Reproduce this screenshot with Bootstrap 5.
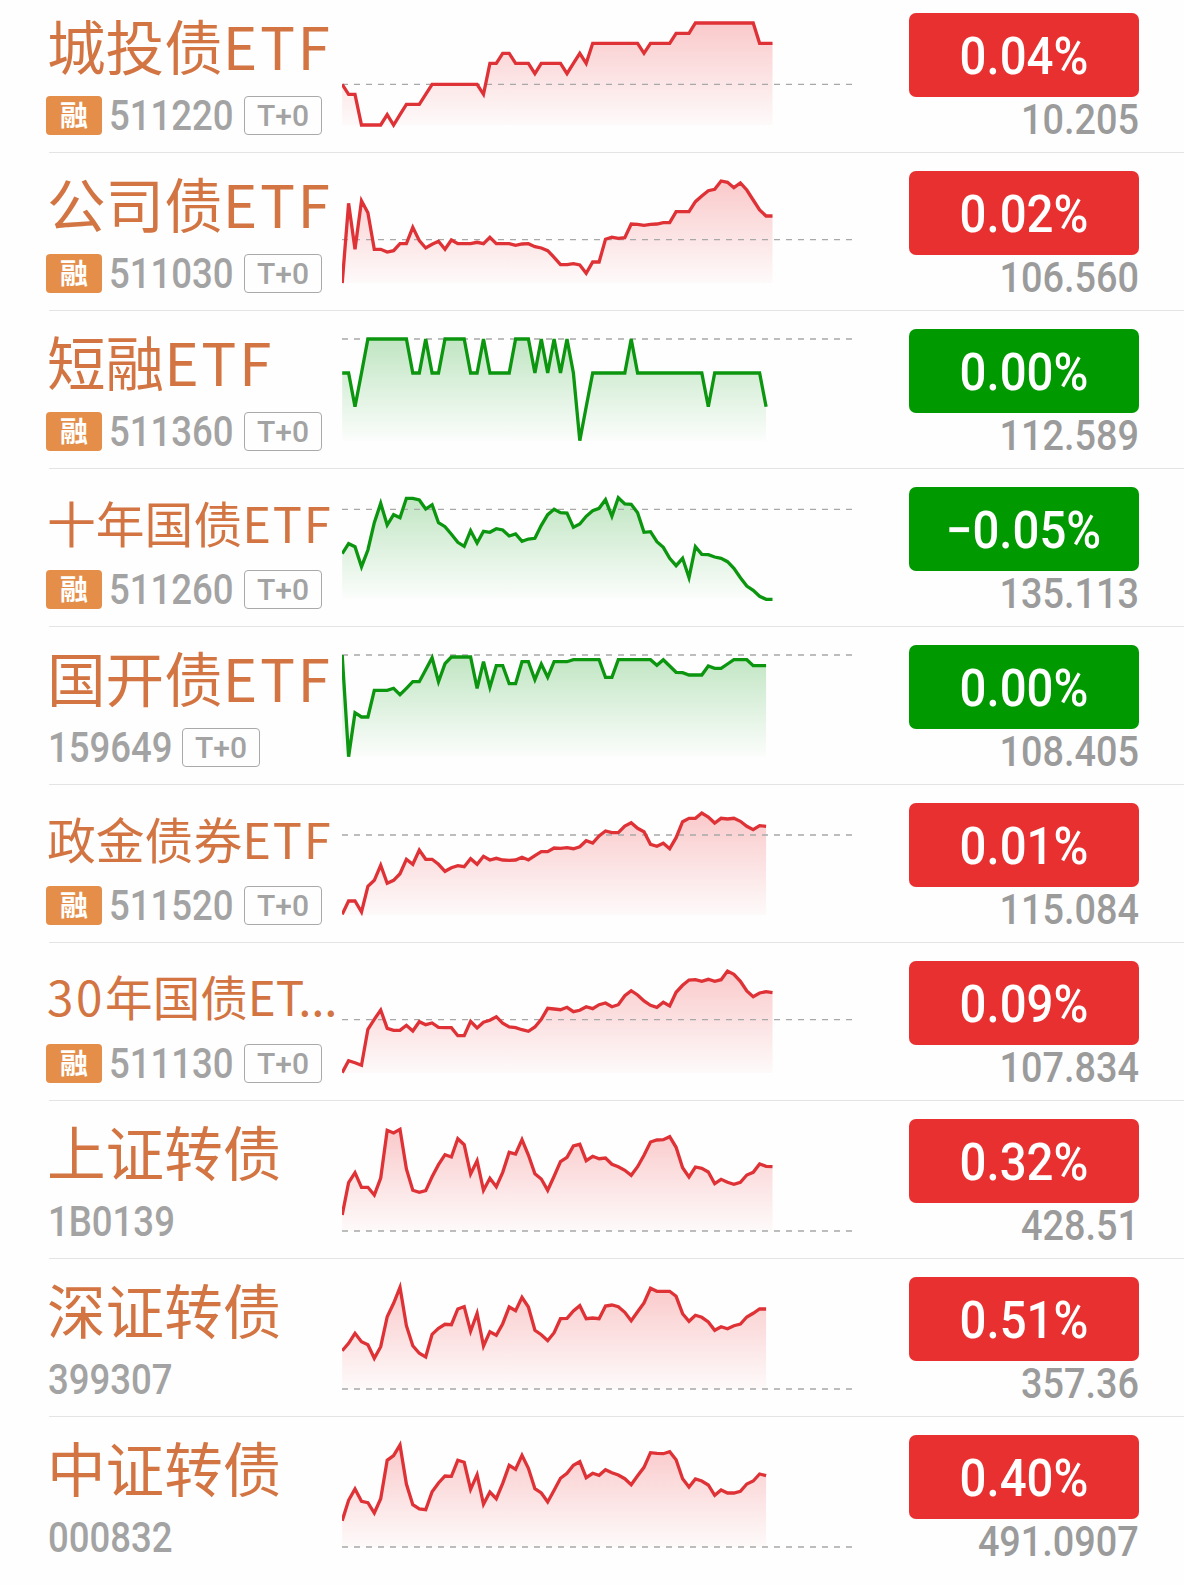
<!DOCTYPE html>
<html lang="zh-CN">
<head>
<meta charset="utf-8">
<meta name="viewport" content="width=device-width, initial-scale=1">
<title>债券ETF行情</title>
<link href="https://cdn.jsdelivr.net/npm/bootstrap@5.3.0/dist/css/bootstrap.min.css" rel="stylesheet">
<style>
  body { background:#fefefe; font-family:Roboto,"Noto Sans CJK SC",sans-serif; overflow:hidden; }
  .quotes { margin:-5px 0 0 49px; }
  .quote { height:158px; border-bottom:1px solid #e4e4e4; }
  .quote:last-child { border-bottom:0; }
  .q-info { width:293px; padding-top:8px; }
  .q-name { height:87px; line-height:83px; margin-left:-2px; font-family:"Noto Sans CJK SC",sans-serif; font-size:58.6px; color:#d37543; }
  .q-name span { letter-spacing:2.6px; }
  .q-name.long { font-size:48.8px; padding-top:3px; }
  .q-name.long span { letter-spacing:1.8px; }
  .q-name.longest { font-size:47.6px; padding-top:3px; }
  .q-name.longest .ell { letter-spacing:-.2px; }
  .q-meta { height:50px; }
  .q-rong { width:56px; height:39px; margin-left:-3px; margin-right:7px; border-radius:4px; background:#e48e4a; color:#fff; font:700 28px/37px "Noto Sans CJK SC",sans-serif; text-align:center; }
  .q-code { width:135px; font-size:42px; font-weight:500; line-height:50px; padding-top:2px; color:#a3a3a3; }
  .q-code span, .q-price span, .q-change span { display:inline-block; transform:scaleX(.87); transform-origin:left; }
  .q-code.plain { width:133px; }
  .q-code.plain span { margin-left:-1px; }
  .q-t0 { width:78px; height:39px; border:1px solid #a9a9a9; border-radius:4px; color:#a3a3a3; font-size:30px; font-weight:500; line-height:38px; text-align:center; }
  .q-chart { width:511px; height:157px; }
  .q-value { width:230px; margin-left:56px; padding-top:18px; }
  .q-change { height:84px; border-radius:7px; color:#fff; font-size:51.5px; font-weight:500; line-height:88px; text-align:center; }
  .q-change span { transform:scaleX(.92); transform-origin:center; }
  .up { background:#e93030; }
  .down { background:#009900; }
  .q-price { height:46px; font-size:42px; font-weight:500; line-height:46px; color:#9b9b9b; text-align:right; }
  .q-price span { transform:scaleX(.9); transform-origin:right; }
</style>
<script src="https://cdn.jsdelivr.net/npm/bootstrap@5.3.0/dist/js/bootstrap.bundle.min.js"></script>
</head>
<body>
<svg width="0" height="0" class="position-absolute">
  <defs>
    <linearGradient id="fillUp" gradientUnits="userSpaceOnUse" x1="0" y1="28" x2="0" y2="130"><stop offset="0" stop-color="#ee3338" stop-opacity=".26"/><stop offset="1" stop-color="#ee3338" stop-opacity=".02"/></linearGradient>
    <linearGradient id="fillDown" gradientUnits="userSpaceOnUse" x1="0" y1="28" x2="0" y2="130"><stop offset="0" stop-color="#109f18" stop-opacity=".26"/><stop offset="1" stop-color="#109f18" stop-opacity=".01"/></linearGradient>
  </defs>
</svg>
<main class="quotes">
  <div class="quote d-flex">
    <div class="q-info flex-shrink-0"><div class="q-name text-nowrap">城投债<span>ETF</span></div><div class="q-meta d-flex align-items-center"><span class="q-rong">融</span><span class="q-code"><span>511220</span></span><span class="q-t0">T+0</span></div></div>
    <svg class="q-chart flex-shrink-0" data-dir="up" data-shift="5" data-base="253" data-v="253 283*2 375*4 344 375 344 313*3 283 253*8 283 190*2 160*2 190*3 221 190*4 221 190 160 190 130*8 160 130*4 100*3 69*10 130*3"></svg>
    <div class="q-value flex-shrink-0"><div class="q-change up"><span>0.04%</span></div><div class="q-price"><span>10.205</span></div></div>
  </div>
  <div class="quote d-flex">
    <div class="q-info flex-shrink-0"><div class="q-name text-nowrap">公司债<span>ETF</span></div><div class="q-meta d-flex align-items-center"><span class="q-rong">融</span><span class="q-code"><span>511030</span></span><span class="q-t0">T+0</span></div></div>
    <svg class="q-chart flex-shrink-0" data-dir="up" data-shift="7" data-base="239" data-v="369 130 268 122 158 268*2 276 272 251*2 202 242 264 253 244 268 240 251*3 247 251 232 251*3 256 252 251 260 264 272 292 314*2 311 315 340 306*2 238 232 235 233 192 193 196 193 192 188*2 155*3 125 108 92 88 63 67 83 69 90 120 150 168*2"></svg>
    <div class="q-value flex-shrink-0"><div class="q-change up"><span>0.02%</span></div><div class="q-price"><span>106.560</span></div></div>
  </div>
  <div class="quote d-flex">
    <div class="q-info flex-shrink-0"><div class="q-name text-nowrap">短融<span>ETF</span></div><div class="q-meta d-flex align-items-center"><span class="q-rong">融</span><span class="q-code"><span>511360</span></span><span class="q-t0">T+0</span></div></div>
    <svg class="q-chart flex-shrink-0" data-dir="down" data-shift="4" data-base="72" data-v="174*2 275 174 72*7 174*2 72 174*2 72*4 174*2 72 174*4 72*3 174 72 174 72 174 72 174 377 275 174*6 72 174*11 275 174*8 275"></svg>
    <div class="q-value flex-shrink-0"><div class="q-change down"><span>0.00%</span></div><div class="q-price"><span>112.589</span></div></div>
  </div>
  <div class="quote d-flex">
    <div class="q-info flex-shrink-0"><div class="q-name long text-nowrap">十年国债<span>ETF</span></div><div class="q-meta d-flex align-items-center"><span class="q-rong">融</span><span class="q-code"><span>511260</span></span><span class="q-t0">T+0</span></div></div>
    <svg class="q-chart flex-shrink-0" data-dir="down" data-shift="6" data-base="103" data-v="236 206 215 275 225 143 85 150 119 128 70*2 75 102 89 143 155 178 202 214 167 204 169 172 161 165 183 177 199 192 190 151 119 103 113 114 157 147 124 107 100 74 124 68 87 88 113 172 170 200 217 250 272 250 308 215 238 239 246 250 260 280 308 333 346 364 373*2"></svg>
    <div class="q-value flex-shrink-0"><div class="q-change down"><span>−0.05%</span></div><div class="q-price"><span>135.113</span></div></div>
  </div>
  <div class="quote d-flex">
    <div class="q-info flex-shrink-0"><div class="q-name text-nowrap">国开债<span>ETF</span></div><div class="q-meta d-flex align-items-center"><span class="q-code plain"><span>159649</span></span><span class="q-t0">T+0</span></div></div>
    <svg class="q-chart flex-shrink-0" data-dir="down" data-shift="3" data-base="75" data-v="75 380 248 261*2 181*3 175 194 175 155*2 119 83 155 101 81*4 175 95 172 107*2 161*2 95*2 149 102 142 95*3 89*5 142*2 89*6 106 89 108 127 128 135*3 108 115*2 102 89*3 107*3"></svg>
    <div class="q-value flex-shrink-0"><div class="q-change down"><span>0.00%</span></div><div class="q-price"><span>108.405</span></div></div>
  </div>
  <div class="quote d-flex">
    <div class="q-info flex-shrink-0"><div class="q-name long text-nowrap">政金债券<span>ETF</span></div><div class="q-meta d-flex align-items-center"><span class="q-rong">融</span><span class="q-code"><span>511520</span></span><span class="q-t0">T+0</span></div></div>
    <svg class="q-chart flex-shrink-0" data-dir="up" data-shift="5" data-base="135" data-v="373 333*2 366 289 271 226 280 271 251 208 223 180 208*2 223 244 233 227 230 206 223 199 210 205 210 211 210 202 210 197 185*2 174 175 173 176 170 152 159 138 123 128*2 108 98 115 125 163 169 160 176 143 95 85*2 69 81 99 85 87 85 94 109 119 107 109"></svg>
    <div class="q-value flex-shrink-0"><div class="q-change up"><span>0.01%</span></div><div class="q-price"><span>115.084</span></div></div>
  </div>
  <div class="quote d-flex">
    <div class="q-info flex-shrink-0"><div class="q-name longest text-nowrap"><span>30</span>年国债<span class="ell">ET...</span></div><div class="q-meta d-flex align-items-center"><span class="q-rong">融</span><span class="q-code"><span>511130</span></span><span class="q-t0">T+0</span></div></div>
    <svg class="q-chart flex-shrink-0" data-dir="up" data-shift="7" data-base="209" data-v="368 332 338 346 238 208 180 235 241*2 226 243 215 224 219 232 233*2 257*2 214 234 217 211 200 220 231 233 239 244 231 208 175 177 179 172 185 181 170 176 164 159 170 164 137 122 135 153 166 172 157 168 127 106 90 89 94 88 94 89 63 73 94 123 140 129 125 128"></svg>
    <div class="q-value flex-shrink-0"><div class="q-change up"><span>0.09%</span></div><div class="q-price"><span>107.834</span></div></div>
  </div>
  <div class="quote d-flex">
    <div class="q-info flex-shrink-0"><div class="q-name text-nowrap">上证转债</div><div class="q-meta d-flex align-items-center"><span class="q-code plain"><span>1B0139</span></span></div></div>
    <svg class="q-chart flex-shrink-0" data-dir="up" data-shift="4" data-base="378" data-v="330 233 203 247*2 270 219 76 84 73 192 256 262 257 215 179 149 156 101 119 207 167 256 220 245 202 142 147 104 150 206 222 256 214 170 157 123 118 167 154 161 159 178 185 196 211 185 151 111 105 104 95 127 188 216 186 190 201 236 223 232 238 232 210 202 177 184 185"></svg>
    <div class="q-value flex-shrink-0"><div class="q-change up"><span>0.32%</span></div><div class="q-price"><span>428.51</span></div></div>
  </div>
  <div class="quote d-flex">
    <div class="q-info flex-shrink-0"><div class="q-name text-nowrap">深证转债</div><div class="q-meta d-flex align-items-center"><span class="q-code plain"><span>399307</span></span></div></div>
    <svg class="q-chart flex-shrink-0" data-dir="up" data-shift="6" data-base="372" data-v="257 235 205 230 239 280 245 155 115 67 182 242 265 276 208 190 178 179 132 125 199 145 243 200 211 176 126 137 97 126 196 209 227 203 161 160 138 122 161 159 161 123 120 125 142 167 140 114 70 79*3 94 146 169 151 157 171 196 185 191 182 177 156 145 132*2"></svg>
    <div class="q-value flex-shrink-0"><div class="q-change up"><span>0.51%</span></div><div class="q-price"><span>357.36</span></div></div>
  </div>
  <div class="quote d-flex">
    <div class="q-info flex-shrink-0"><div class="q-name text-nowrap">中证转债</div><div class="q-meta d-flex align-items-center"><span class="q-code plain"><span>000832</span></span></div></div>
    <svg class="q-chart flex-shrink-0" data-dir="up" data-shift="3" data-base="381" data-v="302 241 207 244 248 279 236 121 107 75 192 254 267 269 215 189 168 169 121 127 208 164 253 216 236 190 136 148 106 145 206 219 246 211 175 160 136 125 173 160 166 149 158 165 176 194 167 142 98 100 101 95 119 176 201 177 183 195 226 210 219*2 214 192 183 162 167"></svg>
    <div class="q-value flex-shrink-0"><div class="q-change up"><span>0.40%</span></div><div class="q-price"><span>491.0907</span></div></div>
  </div>
</main>
<script>
  // Draws each intraday sparkline: "a*n" repeats value a n times; values are in thirds of a pixel.
  document.querySelectorAll('.q-chart').forEach(function (svg) {
    var d = svg.dataset, y = function (v) { return (v / 3 + +d.shift).toFixed(1); };
    var vals = d.v.split(' ').flatMap(function (t) {
      var p = t.split('*'); return Array(+(p[1] || 1)).fill(+p[0]);
    });
    var pts = vals.map(function (v, i) { return (i * 6.422 + .2).toFixed(1) + ',' + y(v); });
    var end = ((vals.length - 1) * 6.422 + .2).toFixed(1), up = d.dir === 'up';
    svg.innerHTML =
      '<polygon points="0.2,130 ' + pts.join(' ') + ' ' + end + ',130" fill="url(#' + (up ? 'fillUp' : 'fillDown') + ')"/>' +
      '<path d="M0 ' + y(+d.base) + 'H511" stroke="#a8a8a8" stroke-width="1.3" stroke-dasharray="6 6"/>' +
      '<polyline points="' + pts.join(' ') + '" fill="none" stroke="' + (up ? '#de3236' : '#0c960f') + '" stroke-width="3.3"/>';
  });
</script>
</body>
</html>
